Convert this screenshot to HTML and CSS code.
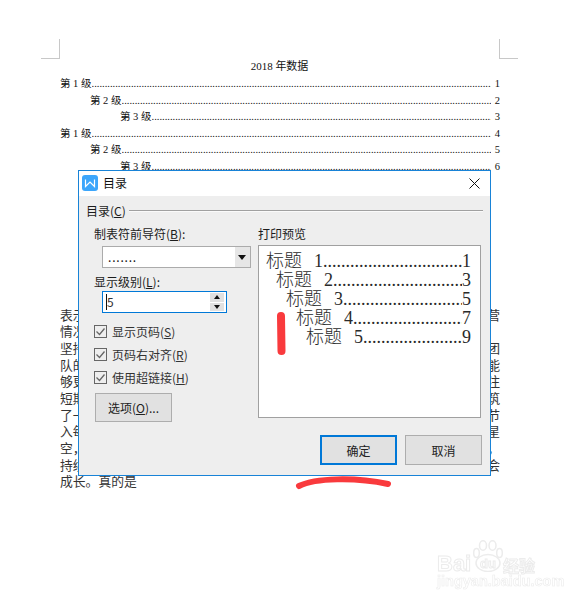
FILE: index.html
```html
<!DOCTYPE html>
<html lang="en">
<head>
  <meta charset="UTF-8">
  <title>目录</title>
  <link rel="stylesheet" href="styles.css">
</head>
<body>
  <div class="page">
    <span class="crop crop-left"></span>
    <span class="crop crop-right"></span>

    <div class="doc-title">2018 年数据</div>

    <div class="toc">
      <div class="toc-row"><span>第 1 级</span><span class="leader"></span><span>1</span></div>
      <div class="toc-row lvl2"><span>第 2 级</span><span class="leader"></span><span>2</span></div>
      <div class="toc-row lvl3"><span>第 3 级</span><span class="leader"></span><span>3</span></div>
      <div class="toc-row"><span>第 1 级</span><span class="leader"></span><span>4</span></div>
      <div class="toc-row lvl2"><span>第 2 级</span><span class="leader"></span><span>5</span></div>
      <div class="toc-row lvl3"><span>第 3 级</span><span class="leader"></span><span>6</span></div>
    </div>

    <div class="para">
      <div class="line"><span>表示</span><span>营</span></div>
      <div class="line"><span>情况</span></div>
      <div class="line"><span>坚持</span><span>团</span></div>
      <div class="line"><span>队的</span><span>能</span></div>
      <div class="line"><span>够更</span><span>注</span></div>
      <div class="line"><span>短期</span><span>筑</span></div>
      <div class="line"><span>了一</span><span>节</span></div>
      <div class="line"><span>入每</span><span>星</span></div>
      <div class="line"><span>空，</span><span>，</span></div>
      <div class="line"><span>持续</span><span>会</span></div>
      <div class="line"><span>成长。真的是</span></div>
    </div>

    <div class="dialog">
      <div class="titlebar">
        <svg class="app-icon" width="16" height="16" viewBox="0 0 16 16">
          <rect width="16" height="16" rx="3" fill="#3ca6fb"/>
          <path d="M3.500 4.500v7l4.500-4.500 4.500 4.500v-7" fill="none" stroke="#fff" stroke-width="1.200"/>
        </svg>
        <span class="title-text">目录</span>
        <svg class="close" width="11" height="11" viewBox="0 0 11 11">
          <path d="M0.500 0.500l10 10M10.500 0.500l-10 10" stroke="#111" stroke-width="1" fill="none"/>
        </svg>
      </div>

      <div class="dialog-body">
        <div class="group-head">
          <span>目录(<u>C</u>)</span>
          <span class="group-line"></span>
        </div>

        <div class="columns">
          <div class="col-left">
            <div class="label">制表符前导符(<u>B</u>):</div>
            <div class="select">
              <span class="select-value">.......</span>
              <span class="select-arrow"></span>
            </div>

            <div class="label label-levels">显示级别(<u>L</u>):</div>
            <div class="spin">
              <span class="spin-value">5</span>
              <span class="spin-btns">
                <span class="spin-btn up"></span>
                <span class="spin-btn down"></span>
              </span>
            </div>

            <div class="checks">
              <div class="check"><svg width="13" height="13" viewBox="0 0 13 13"><rect x="0.500" y="0.500" width="12" height="12" fill="none" stroke="#666"/><path d="M2.500 6.500l3 3 5-6" fill="none" stroke="#666" stroke-width="1.300"/></svg><span>显示页码(<u>S</u>)</span></div>
              <div class="check"><svg width="13" height="13" viewBox="0 0 13 13"><rect x="0.500" y="0.500" width="12" height="12" fill="none" stroke="#666"/><path d="M2.500 6.500l3 3 5-6" fill="none" stroke="#666" stroke-width="1.300"/></svg><span>页码右对齐(<u>R</u>)</span></div>
              <div class="check"><svg width="13" height="13" viewBox="0 0 13 13"><rect x="0.500" y="0.500" width="12" height="12" fill="none" stroke="#666"/><path d="M2.500 6.500l3 3 5-6" fill="none" stroke="#666" stroke-width="1.300"/></svg><span>使用超链接(<u>H</u>)</span></div>
            </div>

            <button class="btn btn-options">选项(<u>O</u>)...</button>
          </div>

          <div class="col-right">
            <div class="label">打印预览</div>
            <div class="preview">
              <div class="prev-row"><span>标题  1</span><span class="leader"></span><span>1</span></div>
              <div class="prev-row p2"><span>标题  2</span><span class="leader"></span><span>3</span></div>
              <div class="prev-row p3"><span>标题  3</span><span class="leader"></span><span>5</span></div>
              <div class="prev-row p4"><span>标题  4</span><span class="leader"></span><span>7</span></div>
              <div class="prev-row p5"><span>标题  5</span><span class="leader"></span><span>9</span></div>
            </div>
          </div>
        </div>

        <div class="dialog-foot">
          <button class="btn btn-ok">确定</button>
          <button class="btn">取消</button>
        </div>
      </div>
    </div>

    <!-- red pen marks drawn over the screenshot -->
    <svg class="pen" width="570" height="602" viewBox="0 0 570 602">
      <path d="M281 316L281.500 351" fill="none" stroke="#f93a3d" stroke-width="8" stroke-linecap="round"/>
      <path d="M299 486C315 478 355 477 388 484" fill="none" stroke="#f93a3d" stroke-width="6" stroke-linecap="round"/>
    </svg>

    <div class="watermark">
      <svg class="paw" width="30" height="32" viewBox="0 0 30 32">
        <g fill="#fff" stroke="#ececec" stroke-width="1.500">
          <ellipse cx="3.500" cy="13" rx="2.800" ry="4.500"/>
          <ellipse cx="10" cy="5.500" rx="3.500" ry="4.800"/>
          <ellipse cx="19.500" cy="5.500" rx="3.500" ry="4.800"/>
          <ellipse cx="26.500" cy="13" rx="2.800" ry="4.500"/>
          <ellipse cx="15" cy="23" rx="12" ry="8.500"/>
        </g>
      </svg>
      <span class="wm-bai">Bai</span>
      <span class="wm-du">du</span>
      <span class="wm-cn">经验</span>
      <span class="wm-url">jingyan.baidu.com</span>
    </div>
  </div>
</body>
</html>
```
FILE: styles.css
```css
body {
  margin: 0;
  background: #fff;
  color: #111;
  font-family: "Liberation Serif", "Noto Sans CJK SC", serif;
}

.page {
  position: relative;
  width: 570px;
  height: 602px;
  overflow: hidden;
  box-sizing: border-box;
  padding: 59px 70px 0 60px;
}

.crop {
  position: absolute;
  top: 39px;
  width: 18px;
  height: 19px;
  border-bottom: 1px solid #c8c8c8;
}

.crop-left {
  left: 41px;
  border-right: 1px solid #c8c8c8;
}

.crop-right {
  left: 499px;
  border-left: 1px solid #c8c8c8;
}

.doc-title {
  font-size: 11px;
  line-height: 14px;
  text-align: center;
  margin-left: -1px;
}

.toc {
  margin-top: 3px;
}

.toc-row {
  display: flex;
  font-size: 10.500px;
  line-height: 16.600px;
}

.lvl2 {
  padding-left: 30px;
}

.lvl3 {
  padding-left: 60px;
}

.leader {
  flex: 1;
  overflow: hidden;
  white-space: nowrap;
  min-width: 0;
}

.toc-row .leader {
  margin-right: 4px;
}

.leader::before {
  content: "................................................................................................................................................................................................";
}

.para {
  margin-top: 131px;
  font-family: "Noto Sans CJK SC", sans-serif;
  font-size: 12.800px;
  line-height: 16.700px;
  color: #333;
}

.line {
  display: flex;
  justify-content: space-between;
  height: 16.700px;
}

/* dialog */
.dialog {
  position: absolute;
  left: 78px;
  top: 170px;
  width: 413px;
  height: 306px;
  box-sizing: border-box;
  border: 1px solid #1883d7;
  background: #eee;
  font-family: "Noto Sans CJK SC", sans-serif;
  font-size: 12px;
  color: #1c1c1c;
}

.titlebar {
  display: flex;
  align-items: center;
  height: 25px;
  box-sizing: border-box;
  padding: 0 10px 1px 3px;
  background: #fff;
}

.title-text {
  margin: 0 0 2px 5px;
  flex: 1;
  font-size: 12px;
  color: #111;
}

.dialog-body {
  padding: 6px 7px 0 7px;
}

.group-head {
  display: flex;
  align-items: center;
  gap: 3px;
  height: 17px;
}

.group-line {
  flex: 1;
  height: 1px;
  background: #a0a0a0;
  box-shadow: 0 1px 0 #fafafa;
}

.columns {
  display: grid;
  grid-template-columns: 164px 223px;
  margin-top: 6px;
  padding-left: 8px;
}

.label {
  height: 17px;
  line-height: 17px;
}

.select {
  display: flex;
  width: 149px;
  height: 22px;
  box-sizing: border-box;
  margin: 4px 0 0 8px;
  border: 1px solid #ababab;
  background: #fff;
}

.select-value {
  flex: 1;
  padding-left: 5px;
  line-height: 20px;
  letter-spacing: 0.800px;
  color: #111;
}

.select-arrow {
  width: 15px;
  background: #e6e6e6;
  position: relative;
}

.select-arrow::after {
  content: "";
  position: absolute;
  left: 3px;
  top: 8px;
  border: 4px solid transparent;
  border-top: 5px solid #111;
  border-bottom: 0;
}

.label-levels {
  margin-top: 5px;
}

.spin {
  display: flex;
  align-items: center;
  justify-content: space-between;
  width: 125px;
  height: 22px;
  box-sizing: border-box;
  margin: 1px 0 0 8px;
  padding: 0 2px 0 3px;
  border: 1px solid #0078d7;
  background: #fff;
}

.spin-value {
  border-left: 1px solid #111;
  line-height: 16px;
  font-size: 12px;
  color: #333;
}

.spin-btns {
  display: flex;
  flex-direction: column;
  gap: 1px;
}

.spin-btn {
  display: block;
  position: relative;
  width: 14px;
  height: 8.500px;
  background: #e1e1e1;
}

.spin-btn::after {
  content: "";
  position: absolute;
  left: 3.500px;
  border: 3.500px solid transparent;
}

.spin-btn.up::after {
  top: 2px;
  border-bottom: 4px solid #111;
  border-top: 0;
}

.spin-btn.down::after {
  top: 2px;
  border-top: 4px solid #111;
  border-bottom: 0;
}

.checks {
  display: flex;
  flex-direction: column;
  gap: 6px;
  margin-top: 10px;
}

.check {
  display: flex;
  align-items: center;
  gap: 5px;
  height: 17px;
  line-height: 17px;
  color: #333;
}

.btn {
  display: block;
  width: 77px;
  height: 30px;
  padding: 0;
  box-sizing: border-box;
  border: 1px solid #adadad;
  background: #e1e1e1;
  color: #222;
  font-family: inherit;
  font-size: 12px;
}

.btn-options {
  margin: 7px 0 0 1px;
  height: 29px;
}

.btn-ok {
  border: 2px solid #0078d7;
}

.preview {
  box-sizing: border-box;
  height: 173px;
  margin-top: 3px;
  padding: 6px 9px 0 7px;
  border: 1px solid #a0a0a0;
  background: #fff;
  color: #2a2a2a;
  font-family: "Liberation Serif", "Noto Sans CJK SC", serif;
  font-size: 18px;
  font-weight: 300;
}

.prev-row {
  display: flex;
  height: 19px;
  line-height: 19px;
  white-space: pre;
  word-spacing: 1.500px;
}

.p2 {
  padding-left: 10px;
}

.p3 {
  padding-left: 20px;
}

.p4 {
  padding-left: 30px;
}

.p5 {
  padding-left: 40px;
}

.dialog-foot {
  display: flex;
  justify-content: flex-end;
  gap: 8px;
  margin-top: 13px;
  padding-right: 1px;
}

/* overlays */
.pen {
  position: absolute;
  left: 0;
  top: 0;
  pointer-events: none;
}

.watermark {
  position: absolute;
  left: 437px;
  top: 540px;
  width: 102px;
  height: 50px;
  font-family: "Liberation Sans", sans-serif;
  font-weight: bold;
  color: #fff;
  -webkit-text-stroke: 1px #ececec;
  filter: blur(0.4px);
}

.paw {
  position: absolute;
  left: 36px;
  top: 0;
}

.wm-bai {
  position: absolute;
  left: 0;
  top: 14px;
  font-size: 22px;
  line-height: 20px;
}

.wm-du {
  position: absolute;
  left: 43px;
  top: 17px;
  font-size: 13px;
  line-height: 13px;
}

.wm-cn {
  position: absolute;
  left: 66px;
  top: 16px;
  font-family: "Noto Sans CJK SC", sans-serif;
  font-size: 16px;
  line-height: 18px;
}

.wm-url {
  position: absolute;
  left: 0;
  top: 35px;
  font-size: 14.500px;
  line-height: 13px;
  white-space: nowrap;
  -webkit-text-stroke: 0.600px #ececec;
}
```
